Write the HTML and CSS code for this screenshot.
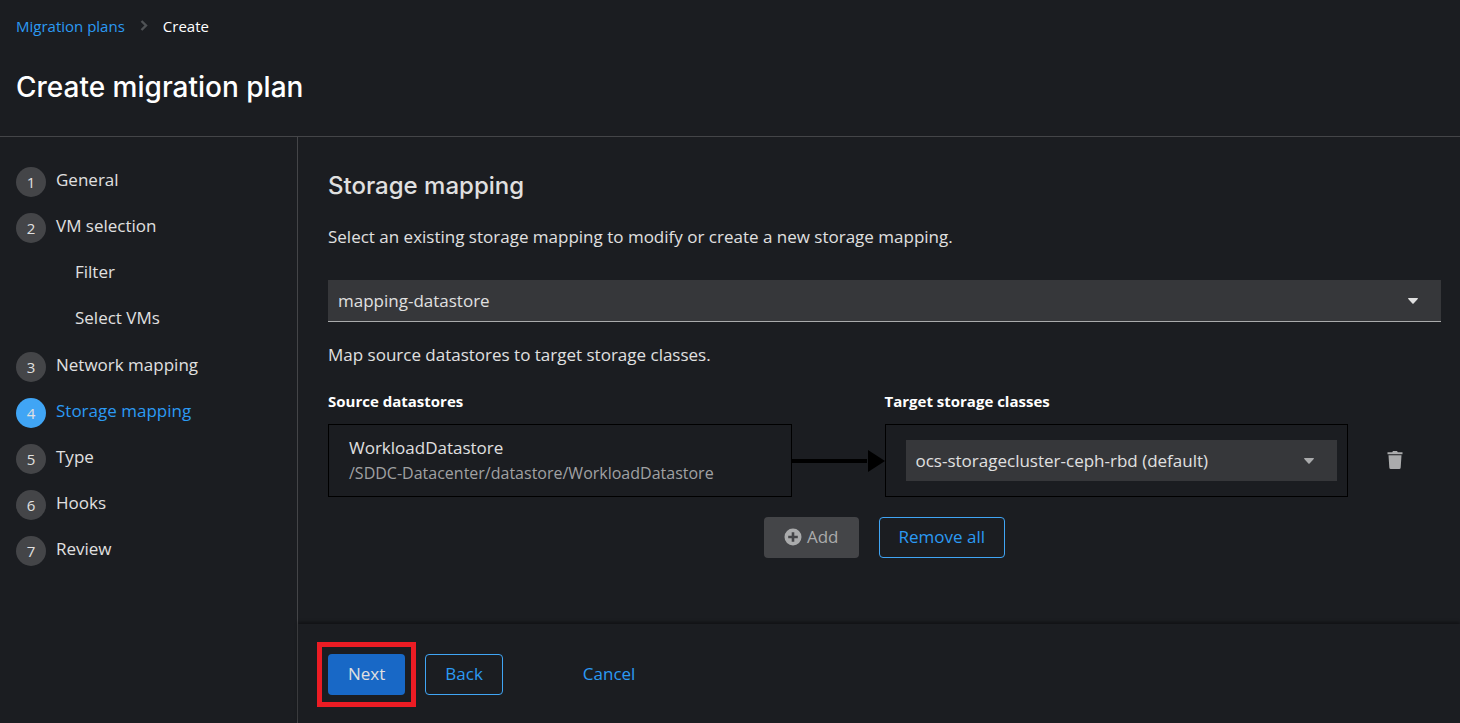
FILE: index.html
```html
<!DOCTYPE html>
<html lang="en">
<head>
<meta charset="utf-8">
<meta name="viewport" content="width=device-width, initial-scale=1">
<title>Create migration plan</title>
<link rel="stylesheet" href="styles.css">
</head>
<body>
<header class="page-header">
  <nav class="breadcrumb" aria-label="Breadcrumb">
    <a href="#plans">Migration plans</a>
    <svg class="breadcrumb-icon" viewBox="0 0 8 12" aria-hidden="true"><path d="M1.500 1 6 5.500 1.500 10" fill="none" stroke="currentColor" stroke-width="2.400"/></svg>
    <span aria-current="page">Create</span>
  </nav>
  <h1 class="page-title">Create migration plan</h1>
</header>
<div class="wizard">
  <nav class="steps" aria-label="Wizard steps">
    <ol class="step-list">
      <li><a class="step" href="#general"><span class="step-number">1</span>General</a></li>
      <li><a class="step" href="#vms"><span class="step-number">2</span>VM selection</a>
        <ol class="substeps">
          <li><a class="step" href="#filter">Filter</a></li>
          <li><a class="step" href="#select">Select VMs</a></li>
        </ol>
      </li>
      <li><a class="step" href="#network"><span class="step-number">3</span>Network mapping</a></li>
      <li><a class="step step-current" href="#storage" aria-current="step"><span class="step-number">4</span>Storage mapping</a></li>
      <li><a class="step" href="#type"><span class="step-number">5</span>Type</a></li>
      <li><a class="step" href="#hooks"><span class="step-number">6</span>Hooks</a></li>
      <li><a class="step" href="#review"><span class="step-number">7</span>Review</a></li>
    </ol>
  </nav>
  <div class="panel">
    <main class="content">
      <h2 class="section-title">Storage mapping</h2>
      <label class="text" for="mapping">Select an existing storage mapping to modify or create a new storage mapping.</label>
      <div class="select select-main">
        <select id="mapping"><option>mapping-datastore</option></select>
        <svg class="caret" viewBox="0 0 10 6" aria-hidden="true"><path d="M.6 0h8.800q.9.200.3 1L5.600 5.500q-.6.600-1.200 0L.3 1Q-.3.200.6 0Z" fill="currentColor"/></svg>
      </div>
      <p class="text">Map source datastores to target storage classes.</p>
      <div class="mapping">
        <h3 class="mapping-label">Source datastores</h3>
        <label class="mapping-label mapping-target" for="target">Target storage classes</label>
        <div class="box">
          <div>WorkloadDatastore</div>
          <div class="path">/SDDC-Datacenter/datastore/WorkloadDatastore</div>
        </div>
        <div class="arrow" aria-hidden="true"><span class="arrow-line"></span><svg class="arrow-head" viewBox="0 0 17 22"><path d="M0 0 17 11 0 22Z"/></svg></div>
        <div class="box">
          <div class="select select-target">
            <select id="target"><option>ocs-storagecluster-ceph-rbd (default)</option></select>
            <svg class="caret" viewBox="0 0 10 6" aria-hidden="true"><path d="M.6 0h8.800q.9.200.3 1L5.600 5.500q-.6.600-1.200 0L.3 1Q-.3.200.6 0Z" fill="currentColor"/></svg>
          </div>
        </div>
        <button class="trash" type="button" aria-label="Remove mapping">
          <svg viewBox="0 0 16 18" aria-hidden="true"><path d="M.5 1.200h4.700L6 0h4l.8 1.200h4.700v2H.5ZM1.500 4.300h13L13.700 16.500q-.1 1.500-1.500 1.500H3.800q-1.400 0-1.500-1.500Z" fill="currentColor"/></svg>
        </button>
      </div>
      <div class="mapping-actions">
        <button class="button button-disabled" type="button" disabled><svg class="plus" viewBox="0 0 18 18" aria-hidden="true"><path fill="currentColor" fill-rule="evenodd" d="M9 .5a8.500 8.500 0 1 0 0 17 8.500 8.500 0 0 0 0-17ZM7.700 4.200h2.600v3.500h3.500v2.600h-3.500v3.500H7.700v-3.500H4.200V7.700h3.500Z"/></svg>Add</button>
        <button class="button button-outline" type="button">Remove all</button>
      </div>
    </main>
    <footer class="footer">
      <button class="button button-primary" type="button">Next</button>
      <button class="button button-outline" type="button">Back</button>
      <button class="button button-cancel" type="button">Cancel</button>
    </footer>
  </div>
</div>
</body>
</html>
```
FILE: styles.css
```css
* { box-sizing: border-box; }

body {
  margin: 0;
  min-height: 100vh;
  display: flex;
  flex-direction: column;
  background: #1b1d21;
  color: #e0e0e0;
  font: 17px/26px "Open Sans", sans-serif;
}

h1, h2, h3, p, ol { margin: 0; padding: 0; font-weight: 400; }
ol { list-style: none; }
a { color: #2b9af3; text-decoration: none; }
button, select { font: inherit; }

.page-header { padding: 14px 16px 29px; border-bottom: 1px solid #444548; }
.breadcrumb { display: flex; align-items: center; font-size: 15px; line-height: 24px; color: #fff; }
.breadcrumb-icon { width: 8px; height: 12px; margin: 0 15px; color: #4f5255; }
.page-title { margin-top: 29px; font-family: Inter, sans-serif; font-size: 28px; line-height: 40px; font-weight: 500; color: #fff; }

.wizard { flex: 1; display: flex; }
.steps { flex: 0 0 298px; padding: 30px 16px; border-right: 1px solid #444548; }
.step-list, .substeps { display: flex; flex-direction: column; gap: 20px; }
.substeps { padding: 20px 0 1px 59px; }
.step { display: flex; gap: 10px; height: 26px; color: #e0e0e0; }
.step-current { color: #2b9af3; }
.step-number {
  flex: none;
  width: 30px;
  height: 30px;
  border-radius: 50%;
  background: #444548;
  color: #e0e0e0;
  font-size: 15px;
  line-height: 30px;
  text-align: center;
}
.step-current .step-number { background: #40a5f5; }

.panel { flex: 1; min-width: 0; display: flex; flex-direction: column; }
.content { flex: 1; padding: 32px 19px 30px 30px; }
.section-title { margin-bottom: 22px; font-family: Inter, sans-serif; font-size: 24px; line-height: 33px; font-weight: 500; }
.text { display: block; }

.select { position: relative; background: #36373a; }
.select select {
  display: block;
  width: 100%;
  height: 41px;
  padding: 0 40px 0 10px;
  border: 0;
  border-radius: 0;
  appearance: none;
  background: transparent;
  color: #e0e0e0;
}
.select-main { margin: 30px 0 20px; border-bottom: 1px solid #aaabac; }
.caret { position: absolute; right: 23px; top: 18px; width: 10px; height: 6px; pointer-events: none; }
.select-target .caret { color: #aaabac; }

.mapping { display: grid; grid-template-columns: 5fr 1fr 5fr 1fr; margin-top: 21px; }
.mapping-label { font-size: 15px; line-height: 24px; font-weight: 700; color: #fff; margin-bottom: 11px; }
.mapping-target { grid-column: 3 / 5; }
.box { min-width: 0; padding: 10px 10px 10px 20px; border: 1px solid #000; display: flex; flex-direction: column; justify-content: center; min-height: 73px; }
.path { font-size: 16px; line-height: 25px; color: #a0a1a3; }
.arrow { display: flex; align-items: center; }
.arrow-line { flex: 1; height: 4px; background: #000; }
.arrow-head { width: 17px; height: 22px; margin-left: 1px; }
.trash { justify-self: center; align-self: center; width: 36px; height: 36px; padding: 8px 10px 10px; border: 0; background: none; color: #aaabac; }
.trash svg { display: block; width: 16px; height: 18px; }

.mapping-actions { display: flex; justify-content: center; gap: 20px; margin-top: 20px; }
.button {
  display: flex;
  align-items: center;
  justify-content: center;
  height: 41px;
  padding: 0 20px 2px;
  border: 0;
  border-radius: 4px;
  background: none;
  color: #2b9af3;
}
.button-disabled { background: #444548; color: #aaabac; }
.button-outline { padding: 0 19px 2px; border: 1px solid #40a5f5; }
.plus { width: 18px; height: 18px; margin-right: 5px; }

.footer { display: flex; gap: 20px; padding: 30px 30px 28px; box-shadow: 0 -2px 3px rgba(0, 0, 0, .4); }
.button-primary { position: relative; background: #1868c6; color: #e0e0e0; }
.button-primary::after { content: ""; position: absolute; inset: -12px -11px; border: 5px solid #ec1c24; }
.button-cancel { margin-left: 40px; }
```
